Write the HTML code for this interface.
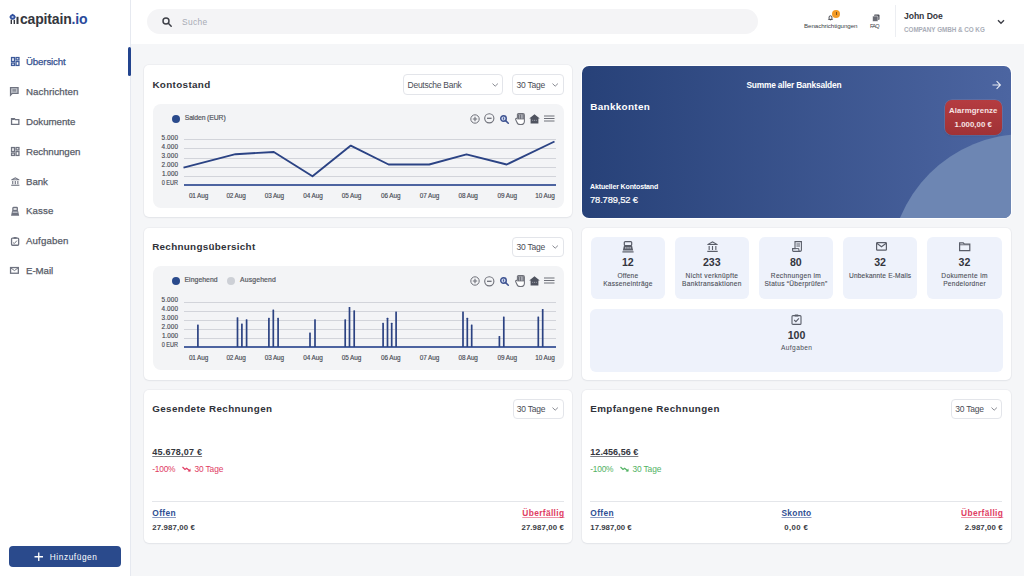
<!DOCTYPE html><html><head><meta charset="utf-8"><style>
html,body{margin:0;padding:0;}
body{width:1024px;height:576px;overflow:hidden;position:relative;background:#f5f6f8;font-family:"Liberation Sans",sans-serif;}
.t{position:absolute;white-space:nowrap;line-height:1;}
svg{display:block}
</style></head><body>
<div style="position:absolute;left:0px;top:0px;width:130px;height:576px;background:#fff;"></div>
<div style="position:absolute;left:130px;top:0px;width:1px;height:576px;background:#e6e9f0;"></div>
<div style="position:absolute;left:131px;top:0px;width:893px;height:44px;background:#fff;"></div>
<div style="position:absolute;left:147px;top:9px;width:611px;height:25px;background:#f4f4f6;border-radius:13px;"></div>
<svg style="position:absolute;left:8px;top:13px;overflow:visible" width="12" height="12" viewBox="0 0 12 12"><g transform="translate(-8,-13)"><g fill="#2f4f9e"><circle cx="12.6" cy="17" r="2.7"/><rect x="12" y="13.9" width="1.2" height="1.4"/><rect x="9.5" y="16.4" width="1.4" height="1.2"/><rect x="14.3" y="16.4" width="1.4" height="1.2"/></g><circle cx="12.6" cy="17" r="1.1" fill="#b8c6e6"/>
<g fill="#33363e"><rect x="10.6" y="19.6" width="1.4" height="4.4"/><rect x="13.6" y="19.8" width="1.4" height="4.2"/><rect x="16.5" y="16.8" width="2" height="7.2"/></g></g></svg>
<div class="t" style="left:20.00px;top:11.64px;font-size:14px;font-weight:700;color:#34363d;letter-spacing:-0.168px;">capitain<span style="color:#2a4a9c">.io</span></div>
<div class="t" style="left:26.00px;top:56.79px;font-size:9.7px;font-weight:400;color:#34508f;letter-spacing:-0.153px;-webkit-text-stroke:0.25px #34508f;">Übersicht</div>
<div class="t" style="left:26.00px;top:86.79px;font-size:9.7px;font-weight:400;color:#575b67;letter-spacing:0.07px;-webkit-text-stroke:0.25px #575b67;">Nachrichten</div>
<div class="t" style="left:26.00px;top:116.79px;font-size:9.7px;font-weight:400;color:#575b67;letter-spacing:-0.019px;-webkit-text-stroke:0.25px #575b67;">Dokumente</div>
<div class="t" style="left:26.00px;top:146.79px;font-size:9.7px;font-weight:400;color:#575b67;letter-spacing:-0.062px;-webkit-text-stroke:0.25px #575b67;">Rechnungen</div>
<div class="t" style="left:26.00px;top:176.79px;font-size:9.7px;font-weight:400;color:#575b67;letter-spacing:-0.079px;-webkit-text-stroke:0.25px #575b67;">Bank</div>
<div class="t" style="left:26.00px;top:206.29px;font-size:9.7px;font-weight:400;color:#575b67;letter-spacing:0.116px;-webkit-text-stroke:0.25px #575b67;">Kasse</div>
<div class="t" style="left:26.00px;top:236.29px;font-size:9.7px;font-weight:400;color:#575b67;letter-spacing:0.13px;-webkit-text-stroke:0.25px #575b67;">Aufgaben</div>
<div class="t" style="left:26.00px;top:266.29px;font-size:9.7px;font-weight:400;color:#575b67;letter-spacing:-0.059px;-webkit-text-stroke:0.25px #575b67;">E-Mail</div>
<div style="position:absolute;left:128px;top:47px;width:2.5px;height:29px;background:#23448e;border-radius:1.5px;"></div>
<svg style="position:absolute;left:10.5px;top:57.3px;overflow:visible" width="8.5" height="9" viewBox="0 0 8.5 9"><g fill="none" stroke="#3d5a9a" stroke-width="1.3"><rect x="0.55" y="0.55" width="2.9" height="4"/><rect x="5.05" y="0.55" width="2.9" height="2.4"/><rect x="0.55" y="6.05" width="2.9" height="2.4"/><rect x="5.05" y="4.55" width="2.9" height="3.9"/></g></svg>
<svg style="position:absolute;left:10.4px;top:87.3px;overflow:visible" width="8.6" height="8.6" viewBox="0 0 8.6 8.6"><path d="M0.55 0.55H8.05V6.4H2.3L0.55 8.1Z" fill="#c9ccd3" stroke="#6f7380" stroke-width="1.3"/><rect x="2.4" y="2.1" width="3.8" height="2.6" fill="#8d919b"/></svg>
<svg style="position:absolute;left:10.5px;top:117.8px;overflow:visible" width="8.4" height="7" viewBox="0 0 8.4 7"><path d="M0.55 0.55H3.4L4.3 1.6H7.85V6.45H0.55Z" fill="none" stroke="#6f7380" stroke-width="1.3"/><rect x="0.55" y="0.55" width="3" height="1.4" fill="#6f7380"/></svg>
<svg style="position:absolute;left:10.5px;top:146.9px;overflow:visible" width="8.5" height="9" viewBox="0 0 8.5 9"><g fill="none" stroke="#6f7380" stroke-width="1.3"><rect x="0.55" y="0.55" width="2.9" height="4"/><rect x="5.05" y="0.55" width="2.9" height="2.4"/><rect x="0.55" y="6.05" width="2.9" height="2.4"/><rect x="5.05" y="4.55" width="2.9" height="3.9"/></g></svg>
<svg style="position:absolute;left:10.5px;top:176.9px;overflow:visible" width="8.6" height="8.8" viewBox="0 0 8.6 8.8"><path d="M4.3 0.3L8.4 2.6V3.3H0.2V2.6Z" fill="#6f7380"/><path d="M4.3 1.3L6.4 2.5H2.2Z" fill="#c9ccd3"/><g fill="#6f7380"><rect x="1.2" y="4" width="1.1" height="3.2"/><rect x="3.75" y="4" width="1.1" height="3.2"/><rect x="6.3" y="4" width="1.1" height="3.2"/><rect x="0.2" y="7.7" width="8.2" height="1.1"/></g></svg>
<svg style="position:absolute;left:10.8px;top:206.9px;overflow:visible" width="8.2" height="8.7" viewBox="0 0 8.2 8.7"><rect x="1.9" y="0.5" width="4.4" height="2.8" rx="0.6" fill="none" stroke="#6f7380" stroke-width="1.3"/><path d="M1.2 3.3H7L8.2 8.7H0Z" fill="#6f7380"/><rect x="1.6" y="4.6" width="5" height="1.2" fill="#c9ccd3"/></svg>
<svg style="position:absolute;left:10.9px;top:236.5px;overflow:visible" width="8.2" height="8.8" viewBox="0 0 8.2 8.8"><rect x="0.55" y="1.1" width="7.1" height="7.15" rx="0.9" fill="none" stroke="#6f7380" stroke-width="1.3"/><rect x="2.6" y="0.1" width="3" height="1.7" rx="0.4" fill="#6f7380"/><path d="M2.1 5.6L3.3 6.6L5.9 3.6" fill="none" stroke="#6f7380" stroke-width="1"/></svg>
<svg style="position:absolute;left:10.2px;top:267.4px;overflow:visible" width="8.9" height="6.8" viewBox="0 0 8.9 6.8"><rect x="0.55" y="0.55" width="7.8" height="5.7" fill="none" stroke="#6f7380" stroke-width="1.3"/><path d="M0.8 0.9L4.45 3.6L8.1 0.9" fill="none" stroke="#6f7380" stroke-width="1"/></svg>
<div style="position:absolute;left:8.7px;top:546.2px;width:112.6px;height:20.8px;background:#2a4a8c;border-radius:4px;"></div>
<svg style="position:absolute;left:34px;top:551.5px;overflow:visible" width="9.5" height="9.5" viewBox="0 0 9.5 9.5"><path d="M4.75 0.5V9M0.5 4.75H9" stroke="#fff" stroke-width="1.3"/></svg>
<div class="t" style="left:49.80px;top:552.77px;font-size:8.3px;font-weight:400;color:#fff;letter-spacing:0.571px;">Hinzufügen</div>
<svg style="position:absolute;left:161.8px;top:16.8px;overflow:visible" width="10" height="10" viewBox="0 0 10 10"><circle cx="4" cy="4" r="3" fill="none" stroke="#3d3f47" stroke-width="1.45"/><path d="M6.3 6.3L9.2 9.2" stroke="#3d3f47" stroke-width="1.5" stroke-linecap="round"/></svg>
<div class="t" style="left:182.00px;top:17.79px;font-size:8.4px;font-weight:400;color:#a8abb5;letter-spacing:0.353px;">Suche</div>
<div class="t" style="left:804.00px;top:23.15px;font-size:6.2px;font-weight:400;color:#3c3e46;letter-spacing:-0.074px;">Benachrichtigungen</div>
<svg style="position:absolute;left:828.3px;top:14.8px;overflow:visible" width="5" height="5.2" viewBox="0 0 5 5.2"><path d="M0.5 4.4H4.5L3.9 3.6V2.2A1.4 1.4 0 0 0 1.1 2.2V3.6Z" fill="none" stroke="#44464e" stroke-width="1"/><rect x="1.9" y="4.5" width="1.2" height="0.8" fill="#44464e"/></svg>
<div style="position:absolute;left:832.3px;top:9.8px;width:8.2px;height:8.2px;border-radius:50%;background:#f39a26;"></div>
<div style="position:absolute;left:836px;top:11.6px;width:0.8px;height:3.6px;background:#7a5320;"></div>
<svg style="position:absolute;left:871.5px;top:14px;overflow:visible" width="8" height="7.5" viewBox="0 0 8 7.5"><rect x="2" y="0.5" width="5.5" height="5.5" rx="1" fill="#4a4c55"/><rect x="0.5" y="2" width="5.5" height="5.5" rx="1" fill="#6a6c75" stroke="#fff" stroke-width="0.6"/></svg>
<div class="t" style="left:870.00px;top:23.86px;font-size:5.6px;font-weight:400;color:#3c3e46;letter-spacing:-0.819px;">FAQ</div>
<div style="position:absolute;left:894.5px;top:5px;width:1px;height:32px;background:#eceef2;"></div>
<div class="t" style="left:904.00px;top:11.72px;font-size:8.6px;font-weight:700;color:#34363d;letter-spacing:-0.053px;">John Doe</div>
<div class="t" style="left:904.00px;top:26.57px;font-size:6.3px;font-weight:700;color:#a9adb7;letter-spacing:-0.026px;">COMPANY GMBH &amp; CO KG</div>
<svg style="position:absolute;left:996.5px;top:18.5px;overflow:visible" width="8" height="6" viewBox="0 0 8 6"><path d="M1 1.2L4 4.2L7 1.2" fill="none" stroke="#3d3f47" stroke-width="1.4"/></svg>
<div style="position:absolute;left:143.5px;top:65px;width:428.5px;height:152px;background:#fff;border-radius:5px;box-shadow:0 0 0 1px rgba(20,30,60,0.03),0 1px 2px rgba(20,30,60,0.05);"></div>
<div style="position:absolute;left:143.5px;top:227.5px;width:428.5px;height:152.5px;background:#fff;border-radius:5px;box-shadow:0 0 0 1px rgba(20,30,60,0.03),0 1px 2px rgba(20,30,60,0.05);"></div>
<div style="position:absolute;left:143.5px;top:390px;width:428.5px;height:152.5px;background:#fff;border-radius:5px;box-shadow:0 0 0 1px rgba(20,30,60,0.03),0 1px 2px rgba(20,30,60,0.05);"></div>
<div style="position:absolute;left:581.5px;top:227.5px;width:429.5px;height:152.5px;background:#fff;border-radius:5px;box-shadow:0 0 0 1px rgba(20,30,60,0.03),0 1px 2px rgba(20,30,60,0.05);"></div>
<div style="position:absolute;left:581.5px;top:390px;width:429.5px;height:152.5px;background:#fff;border-radius:5px;box-shadow:0 0 0 1px rgba(20,30,60,0.03),0 1px 2px rgba(20,30,60,0.05);"></div>
<div class="t" style="left:152.40px;top:79.92px;font-size:9.9px;font-weight:700;color:#303239;letter-spacing:0.331px;">Kontostand</div>
<div style="position:absolute;left:403.3px;top:74.3px;width:99.89999999999998px;height:20.900000000000006px;box-sizing:border-box;border:1px solid #e3e5ea;border-radius:4px;background:#fff;"></div>
<div class="t" style="left:407.60px;top:80.55px;font-size:8.5px;font-weight:400;color:#4a4c55;letter-spacing:-0.283px;">Deutsche Bank</div>
<svg style="position:absolute;left:491.5px;top:82.75px;overflow:visible" width="6.4" height="4" viewBox="0 0 6.4 4"><path d="M0.5 0.6L3.2 3.2L5.9 0.6" fill="none" stroke="#7a7d86" stroke-width="0.9"/></svg>
<div style="position:absolute;left:512.2px;top:74.3px;width:51.59999999999991px;height:20.900000000000006px;box-sizing:border-box;border:1px solid #e3e5ea;border-radius:4px;background:#fff;"></div>
<div class="t" style="left:516.50px;top:80.55px;font-size:8.5px;font-weight:400;color:#4a4c55;letter-spacing:-0.237px;">30 Tage</div>
<svg style="position:absolute;left:552.0999999999999px;top:82.75px;overflow:visible" width="6.4" height="4" viewBox="0 0 6.4 4"><path d="M0.5 0.6L3.2 3.2L5.9 0.6" fill="none" stroke="#7a7d86" stroke-width="0.9"/></svg>
<div style="position:absolute;left:152.5px;top:104.4px;width:411px;height:103.6px;background:#f3f4f6;border-radius:8px;"></div>
<div style="position:absolute;left:171.8px;top:114.8px;width:8.4px;height:8.4px;border-radius:50%;background:#2a4a8c;"></div>
<div class="t" style="left:184.70px;top:115.44px;font-size:6.8px;font-weight:400;color:#55585f;letter-spacing:-0.088px;-webkit-text-stroke:0.2px #55585f;">Salden (EUR)</div>
<svg style="position:absolute;left:469.6px;top:113.7px;overflow:visible" width="10" height="10" viewBox="0 0 10 10"><circle cx="5" cy="5" r="4.2" fill="none" stroke="#6e7079" stroke-width="1"/><path d="M5 2.8V7.2M2.8 5H7.2" stroke="#6e7079" stroke-width="1.1"/></svg>
<svg style="position:absolute;left:484.2px;top:113.4px;overflow:visible" width="10.6" height="10.6" viewBox="0 0 10.6 10.6"><circle cx="5.3" cy="5.3" r="4.6" fill="none" stroke="#6e7079" stroke-width="1.1"/><path d="M3 5.3H7.6" stroke="#6e7079" stroke-width="1.3"/></svg>
<svg style="position:absolute;left:500px;top:114.8px;overflow:visible" width="9" height="8.8" viewBox="0 0 9 8.8"><circle cx="3.5" cy="3.5" r="2.8" fill="#c9d3ec" stroke="#3d5290" stroke-width="1.4"/><path d="M5.6 5.6L8.3 8.3" stroke="#3d5290" stroke-width="1.5" stroke-linecap="round"/><rect x="3.05" y="2.4" width="0.9" height="2.2" fill="#3d5290"/></svg>
<svg style="position:absolute;left:514.6px;top:112.6px;overflow:visible" width="10" height="12.2" viewBox="0 0 10 12.2"><path d="M2.4 5.2V2.2A1.2 1.2 0 0 1 3.6 0.6H8A1.4 1.4 0 0 1 9.4 2V8.4A3.4 3.4 0 0 1 6 11.6H5.2A3.6 3.6 0 0 1 1.8 9L0.6 6.6A0.9 0.9 0 0 1 2.2 5.8L2.4 6.4" fill="#fff" stroke="#6e7079" stroke-width="1.05"/><path d="M2.9 1.2H9V6.4H2.9Z" fill="#6e7079"/><g fill="#d8dbe2"><rect x="4.5" y="1.8" width="0.55" height="3.8"/><rect x="6.1" y="1.6" width="0.55" height="4"/><rect x="7.6" y="2" width="0.55" height="3.6"/></g></svg>
<svg style="position:absolute;left:529px;top:113.8px;overflow:visible" width="11" height="9.6" viewBox="0 0 11 9.6"><path d="M5.5 0.3L10.8 4.6H9.4V9.4H1.6V4.6H0.2Z" fill="#4f535f"/><g fill="#9a9ea8"><rect x="3.2" y="5.8" width="1" height="1.1"/><rect x="5" y="5.8" width="1" height="1.1"/><rect x="6.8" y="5.8" width="1" height="1.1"/></g></svg>
<svg style="position:absolute;left:544.2px;top:115px;overflow:visible" width="10.5" height="7" viewBox="0 0 10.5 7"><path d="M0 1H10.5M0 3.5H10.5M0 6H10.5" stroke="#6e7079" stroke-width="1.1"/></svg>
<div style="position:absolute;left:184px;top:139px;width:371.7px;height:1px;background:#d2d4da;"></div>
<div style="position:absolute;left:184px;top:148px;width:371.7px;height:1px;background:#d2d4da;"></div>
<div style="position:absolute;left:184px;top:158px;width:371.7px;height:1px;background:#d2d4da;"></div>
<div style="position:absolute;left:184px;top:167px;width:371.7px;height:1px;background:#d2d4da;"></div>
<div style="position:absolute;left:184px;top:176px;width:371.7px;height:1px;background:#d2d4da;"></div>
<div style="position:absolute;left:184px;top:184.1px;width:371.7px;height:1.6px;background:#4d64a0;"></div>
<div class="t" style="left:-121.86px;width:300px;text-align:right;top:135.03px;font-size:6.4px;font-weight:400;color:#474a53;letter-spacing:0.14px;-webkit-text-stroke:0.15px #474a53;">5.000</div>
<div class="t" style="left:-121.86px;width:300px;text-align:right;top:144.03px;font-size:6.4px;font-weight:400;color:#474a53;letter-spacing:0.14px;-webkit-text-stroke:0.15px #474a53;">4.000</div>
<div class="t" style="left:-121.86px;width:300px;text-align:right;top:153.13px;font-size:6.4px;font-weight:400;color:#474a53;letter-spacing:0.14px;-webkit-text-stroke:0.15px #474a53;">3.000</div>
<div class="t" style="left:-121.86px;width:300px;text-align:right;top:162.13px;font-size:6.4px;font-weight:400;color:#474a53;letter-spacing:0.14px;-webkit-text-stroke:0.15px #474a53;">2.000</div>
<div class="t" style="left:-121.98px;width:300px;text-align:right;top:171.23px;font-size:6.4px;font-weight:400;color:#474a53;letter-spacing:0.015px;-webkit-text-stroke:0.15px #474a53;">1.000</div>
<div class="t" style="left:-122.00px;width:300px;text-align:right;top:180.23px;font-size:6.4px;font-weight:400;color:#474a53;transform:scaleX(0.865);transform-origin:100% 50%;-webkit-text-stroke:0.15px #474a53;">0 EUR</div>
<div class="t" style="left:48.55px;width:300px;text-align:center;top:193.08px;font-size:6.4px;font-weight:400;color:#474a53;letter-spacing:-0.1px;-webkit-text-stroke:0.15px #474a53;">01 Aug</div>
<div class="t" style="left:86.05px;width:300px;text-align:center;top:193.08px;font-size:6.4px;font-weight:400;color:#474a53;letter-spacing:-0.1px;-webkit-text-stroke:0.15px #474a53;">02 Aug</div>
<div class="t" style="left:124.35px;width:300px;text-align:center;top:193.08px;font-size:6.4px;font-weight:400;color:#474a53;letter-spacing:-0.1px;-webkit-text-stroke:0.15px #474a53;">03 Aug</div>
<div class="t" style="left:162.95px;width:300px;text-align:center;top:193.08px;font-size:6.4px;font-weight:400;color:#474a53;letter-spacing:-0.1px;-webkit-text-stroke:0.15px #474a53;">04 Aug</div>
<div class="t" style="left:201.45px;width:300px;text-align:center;top:193.08px;font-size:6.4px;font-weight:400;color:#474a53;letter-spacing:-0.1px;-webkit-text-stroke:0.15px #474a53;">05 Aug</div>
<div class="t" style="left:240.75px;width:300px;text-align:center;top:193.08px;font-size:6.4px;font-weight:400;color:#474a53;letter-spacing:-0.1px;-webkit-text-stroke:0.15px #474a53;">06 Aug</div>
<div class="t" style="left:279.45px;width:300px;text-align:center;top:193.08px;font-size:6.4px;font-weight:400;color:#474a53;letter-spacing:-0.1px;-webkit-text-stroke:0.15px #474a53;">07 Aug</div>
<div class="t" style="left:318.15px;width:300px;text-align:center;top:193.08px;font-size:6.4px;font-weight:400;color:#474a53;letter-spacing:-0.1px;-webkit-text-stroke:0.15px #474a53;">08 Aug</div>
<div class="t" style="left:357.25px;width:300px;text-align:center;top:193.08px;font-size:6.4px;font-weight:400;color:#474a53;letter-spacing:-0.1px;-webkit-text-stroke:0.15px #474a53;">09 Aug</div>
<div class="t" style="left:394.95px;width:300px;text-align:center;top:193.08px;font-size:6.4px;font-weight:400;color:#474a53;letter-spacing:-0.1px;-webkit-text-stroke:0.15px #474a53;">10 Aug</div>
<svg style="position:absolute;left:0;top:0" width="1024" height="576"><path d="M183.5 167.7 L235.5 154.2 L273.8 152.0 L312.5 176.3 L350.8 145.6 L388.6 164.5 L429.2 164.5 L466.5 154.4 L506.7 164.5 L554.5 141.5" fill="none" stroke="#2b4384" stroke-width="1.9" stroke-linejoin="round"/></svg>
<div class="t" style="left:152.20px;top:242.32px;font-size:9.9px;font-weight:700;color:#303239;letter-spacing:0.281px;">Rechnungsübersicht</div>
<div style="position:absolute;left:512.2px;top:236.7px;width:51.59999999999991px;height:20.69999999999999px;box-sizing:border-box;border:1px solid #e3e5ea;border-radius:4px;background:#fff;"></div>
<div class="t" style="left:516.50px;top:242.85px;font-size:8.5px;font-weight:400;color:#4a4c55;letter-spacing:-0.237px;">30 Tage</div>
<svg style="position:absolute;left:552.0999999999999px;top:245.04999999999998px;overflow:visible" width="6.4" height="4" viewBox="0 0 6.4 4"><path d="M0.5 0.6L3.2 3.2L5.9 0.6" fill="none" stroke="#7a7d86" stroke-width="0.9"/></svg>
<div style="position:absolute;left:152.5px;top:266.3px;width:411px;height:103.5px;background:#f3f4f6;border-radius:8px;"></div>
<div style="position:absolute;left:171.9px;top:276.8px;width:8px;height:8px;border-radius:50%;background:#2a4a8c;"></div>
<div class="t" style="left:184.50px;top:277.44px;font-size:6.8px;font-weight:400;color:#55585f;letter-spacing:0.072px;-webkit-text-stroke:0.2px #55585f;">Eingehend</div>
<div style="position:absolute;left:227.2px;top:276.8px;width:8px;height:8px;border-radius:50%;background:#cdd0d6;"></div>
<div class="t" style="left:240.00px;top:277.44px;font-size:6.8px;font-weight:400;color:#55585f;letter-spacing:0.173px;-webkit-text-stroke:0.2px #55585f;">Ausgehend</div>
<svg style="position:absolute;left:469.6px;top:275.9px;overflow:visible" width="10" height="10" viewBox="0 0 10 10"><circle cx="5" cy="5" r="4.2" fill="none" stroke="#6e7079" stroke-width="1"/><path d="M5 2.8V7.2M2.8 5H7.2" stroke="#6e7079" stroke-width="1.1"/></svg>
<svg style="position:absolute;left:484.2px;top:275.6px;overflow:visible" width="10.6" height="10.6" viewBox="0 0 10.6 10.6"><circle cx="5.3" cy="5.3" r="4.6" fill="none" stroke="#6e7079" stroke-width="1.1"/><path d="M3 5.3H7.6" stroke="#6e7079" stroke-width="1.3"/></svg>
<svg style="position:absolute;left:500px;top:277.0px;overflow:visible" width="9" height="8.8" viewBox="0 0 9 8.8"><circle cx="3.5" cy="3.5" r="2.8" fill="#c9d3ec" stroke="#3d5290" stroke-width="1.4"/><path d="M5.6 5.6L8.3 8.3" stroke="#3d5290" stroke-width="1.5" stroke-linecap="round"/><rect x="3.05" y="2.4" width="0.9" height="2.2" fill="#3d5290"/></svg>
<svg style="position:absolute;left:514.6px;top:274.79999999999995px;overflow:visible" width="10" height="12.2" viewBox="0 0 10 12.2"><path d="M2.4 5.2V2.2A1.2 1.2 0 0 1 3.6 0.6H8A1.4 1.4 0 0 1 9.4 2V8.4A3.4 3.4 0 0 1 6 11.6H5.2A3.6 3.6 0 0 1 1.8 9L0.6 6.6A0.9 0.9 0 0 1 2.2 5.8L2.4 6.4" fill="#fff" stroke="#6e7079" stroke-width="1.05"/><path d="M2.9 1.2H9V6.4H2.9Z" fill="#6e7079"/><g fill="#d8dbe2"><rect x="4.5" y="1.8" width="0.55" height="3.8"/><rect x="6.1" y="1.6" width="0.55" height="4"/><rect x="7.6" y="2" width="0.55" height="3.6"/></g></svg>
<svg style="position:absolute;left:529px;top:276.0px;overflow:visible" width="11" height="9.6" viewBox="0 0 11 9.6"><path d="M5.5 0.3L10.8 4.6H9.4V9.4H1.6V4.6H0.2Z" fill="#4f535f"/><g fill="#9a9ea8"><rect x="3.2" y="5.8" width="1" height="1.1"/><rect x="5" y="5.8" width="1" height="1.1"/><rect x="6.8" y="5.8" width="1" height="1.1"/></g></svg>
<svg style="position:absolute;left:544.2px;top:277.2px;overflow:visible" width="10.5" height="7" viewBox="0 0 10.5 7"><path d="M0 1H10.5M0 3.5H10.5M0 6H10.5" stroke="#6e7079" stroke-width="1.1"/></svg>
<div style="position:absolute;left:184px;top:302px;width:371.7px;height:1px;background:#d2d4da;"></div>
<div style="position:absolute;left:184px;top:311px;width:371.7px;height:1px;background:#d2d4da;"></div>
<div style="position:absolute;left:184px;top:320px;width:371.7px;height:1px;background:#d2d4da;"></div>
<div style="position:absolute;left:184px;top:329px;width:371.7px;height:1px;background:#d2d4da;"></div>
<div style="position:absolute;left:184px;top:338px;width:371.7px;height:1px;background:#d2d4da;"></div>
<div style="position:absolute;left:184px;top:346.3px;width:371.7px;height:1.6px;background:#4d64a0;"></div>
<div class="t" style="left:-121.86px;width:300px;text-align:right;top:297.23px;font-size:6.4px;font-weight:400;color:#474a53;letter-spacing:0.14px;-webkit-text-stroke:0.15px #474a53;">5.000</div>
<div class="t" style="left:-121.86px;width:300px;text-align:right;top:306.23px;font-size:6.4px;font-weight:400;color:#474a53;letter-spacing:0.14px;-webkit-text-stroke:0.15px #474a53;">4.000</div>
<div class="t" style="left:-121.86px;width:300px;text-align:right;top:315.33px;font-size:6.4px;font-weight:400;color:#474a53;letter-spacing:0.14px;-webkit-text-stroke:0.15px #474a53;">3.000</div>
<div class="t" style="left:-121.86px;width:300px;text-align:right;top:324.33px;font-size:6.4px;font-weight:400;color:#474a53;letter-spacing:0.14px;-webkit-text-stroke:0.15px #474a53;">2.000</div>
<div class="t" style="left:-121.98px;width:300px;text-align:right;top:333.43px;font-size:6.4px;font-weight:400;color:#474a53;letter-spacing:0.015px;-webkit-text-stroke:0.15px #474a53;">1.000</div>
<div class="t" style="left:-122.00px;width:300px;text-align:right;top:342.43px;font-size:6.4px;font-weight:400;color:#474a53;transform:scaleX(0.865);transform-origin:100% 50%;-webkit-text-stroke:0.15px #474a53;">0 EUR</div>
<div class="t" style="left:48.55px;width:300px;text-align:center;top:355.28px;font-size:6.4px;font-weight:400;color:#474a53;letter-spacing:-0.1px;-webkit-text-stroke:0.15px #474a53;">01 Aug</div>
<div class="t" style="left:86.05px;width:300px;text-align:center;top:355.28px;font-size:6.4px;font-weight:400;color:#474a53;letter-spacing:-0.1px;-webkit-text-stroke:0.15px #474a53;">02 Aug</div>
<div class="t" style="left:124.35px;width:300px;text-align:center;top:355.28px;font-size:6.4px;font-weight:400;color:#474a53;letter-spacing:-0.1px;-webkit-text-stroke:0.15px #474a53;">03 Aug</div>
<div class="t" style="left:162.95px;width:300px;text-align:center;top:355.28px;font-size:6.4px;font-weight:400;color:#474a53;letter-spacing:-0.1px;-webkit-text-stroke:0.15px #474a53;">04 Aug</div>
<div class="t" style="left:201.45px;width:300px;text-align:center;top:355.28px;font-size:6.4px;font-weight:400;color:#474a53;letter-spacing:-0.1px;-webkit-text-stroke:0.15px #474a53;">05 Aug</div>
<div class="t" style="left:240.75px;width:300px;text-align:center;top:355.28px;font-size:6.4px;font-weight:400;color:#474a53;letter-spacing:-0.1px;-webkit-text-stroke:0.15px #474a53;">06 Aug</div>
<div class="t" style="left:279.45px;width:300px;text-align:center;top:355.28px;font-size:6.4px;font-weight:400;color:#474a53;letter-spacing:-0.1px;-webkit-text-stroke:0.15px #474a53;">07 Aug</div>
<div class="t" style="left:318.15px;width:300px;text-align:center;top:355.28px;font-size:6.4px;font-weight:400;color:#474a53;letter-spacing:-0.1px;-webkit-text-stroke:0.15px #474a53;">08 Aug</div>
<div class="t" style="left:357.25px;width:300px;text-align:center;top:355.28px;font-size:6.4px;font-weight:400;color:#474a53;letter-spacing:-0.1px;-webkit-text-stroke:0.15px #474a53;">09 Aug</div>
<div class="t" style="left:394.95px;width:300px;text-align:center;top:355.28px;font-size:6.4px;font-weight:400;color:#474a53;letter-spacing:-0.1px;-webkit-text-stroke:0.15px #474a53;">10 Aug</div>
<svg style="position:absolute;left:0;top:0" width="1024" height="576"><g fill="#2b4282"><rect x="197.05" y="324.50" width="1.7" height="22.50" rx="0.5"/><rect x="236.65" y="317.30" width="1.7" height="29.70" rx="0.5"/><rect x="241.05" y="323.50" width="1.7" height="23.50" rx="0.5"/><rect x="245.75" y="319.30" width="1.7" height="27.70" rx="0.5"/><rect x="268.05" y="317.70" width="1.7" height="29.30" rx="0.5"/><rect x="272.45" y="309.50" width="1.7" height="37.50" rx="0.5"/><rect x="277.25" y="317.70" width="1.7" height="29.30" rx="0.5"/><rect x="309.15" y="332.50" width="1.7" height="14.50" rx="0.5"/><rect x="314.15" y="319.20" width="1.7" height="27.80" rx="0.5"/><rect x="344.35" y="319.20" width="1.7" height="27.80" rx="0.5"/><rect x="348.65" y="307.00" width="1.7" height="40.00" rx="0.5"/><rect x="353.35" y="310.20" width="1.7" height="36.80" rx="0.5"/><rect x="382.25" y="322.80" width="1.7" height="24.20" rx="0.5"/><rect x="386.65" y="317.70" width="1.7" height="29.30" rx="0.5"/><rect x="390.85" y="322.80" width="1.7" height="24.20" rx="0.5"/><rect x="395.25" y="311.40" width="1.7" height="35.60" rx="0.5"/><rect x="462.15" y="311.40" width="1.7" height="35.60" rx="0.5"/><rect x="466.45" y="317.70" width="1.7" height="29.30" rx="0.5"/><rect x="470.85" y="324.40" width="1.7" height="22.60" rx="0.5"/><rect x="498.55" y="336.00" width="1.7" height="11.00" rx="0.5"/><rect x="502.95" y="316.60" width="1.7" height="30.40" rx="0.5"/><rect x="537.45" y="316.60" width="1.7" height="30.40" rx="0.5"/><rect x="541.85" y="309.00" width="1.7" height="38.00" rx="0.5"/></g></svg>
<div style="position:absolute;left:581.5px;top:65.5px;width:429.5px;height:152.5px;border-radius:7px;overflow:hidden;background:linear-gradient(90deg,#274178 0%,#4c65a1 100%);box-shadow:0 0 0 1px #fff;">
<div style="position:absolute;left:308.5px;top:68.9px;width:270px;height:270px;border-radius:50%;background:#6d86b3;"></div>
</div>
<div class="t" style="left:643.90px;width:300px;text-align:center;top:80.69px;font-size:8.4px;font-weight:700;color:#ffffff;letter-spacing:-0.192px;">Summe aller Banksalden</div>
<svg style="position:absolute;left:991.5px;top:79.5px;overflow:visible" width="9" height="10" viewBox="0 0 9 10"><path d="M0.5 5H8.2M4.6 1.2L8.4 5L4.6 8.8" fill="none" stroke="#e6eaf3" stroke-width="1.1"/></svg>
<div class="t" style="left:590.30px;top:102.42px;font-size:9.9px;font-weight:700;color:#ffffff;letter-spacing:0.335px;">Bankkonten</div>
<div style="position:absolute;left:944.5px;top:99.8px;width:57.5px;height:35.3px;border-radius:7px;background:linear-gradient(180deg,#b53c40,#a03236);box-shadow:0 0 0 0.6px rgba(255,200,200,0.25),0 1px 2px rgba(0,0,0,0.12);"></div>
<div class="t" style="left:823.31px;width:300px;text-align:center;top:106.79px;font-size:7.8px;font-weight:700;color:#f7e4e4;letter-spacing:0.111px;">Alarmgrenze</div>
<div class="t" style="left:823.28px;width:300px;text-align:center;top:120.89px;font-size:7.8px;font-weight:700;color:#f7e4e4;letter-spacing:0.054px;">1.000,00 €</div>
<div class="t" style="left:590.00px;top:182.57px;font-size:7.0px;font-weight:700;color:#ffffff;letter-spacing:-0.132px;">Aktueller Kontostand</div>
<div class="t" style="left:590.00px;top:194.84px;font-size:9.4px;font-weight:400;color:#ffffff;letter-spacing:-0.151px;-webkit-text-stroke:0.2px #fff;">78.789,52 €</div>
<div style="position:absolute;left:590.5px;top:236.5px;width:74.6px;height:62.8px;background:#eef2fb;border-radius:6px;"></div>
<div class="t" style="left:477.80px;width:300px;text-align:center;top:257.12px;font-size:10.6px;font-weight:700;color:#34363e;">12</div>
<div class="t" style="left:477.90px;width:300px;text-align:center;top:272.91px;font-size:6.6px;font-weight:400;color:#4b4e57;letter-spacing:0.198px;-webkit-text-stroke:0.1px #4b4e57;">Offene</div>
<div class="t" style="left:477.93px;width:300px;text-align:center;top:281.31px;font-size:6.6px;font-weight:400;color:#4b4e57;letter-spacing:0.265px;-webkit-text-stroke:0.1px #4b4e57;">Kasseneinträge</div>
<div style="position:absolute;left:674.5px;top:236.5px;width:74.6px;height:62.8px;background:#eef2fb;border-radius:6px;"></div>
<div class="t" style="left:561.80px;width:300px;text-align:center;top:257.12px;font-size:10.6px;font-weight:700;color:#34363e;">233</div>
<div class="t" style="left:561.96px;width:300px;text-align:center;top:272.91px;font-size:6.6px;font-weight:400;color:#4b4e57;letter-spacing:0.322px;-webkit-text-stroke:0.1px #4b4e57;">Nicht verknüpfte</div>
<div class="t" style="left:561.95px;width:300px;text-align:center;top:281.31px;font-size:6.6px;font-weight:400;color:#4b4e57;letter-spacing:0.297px;-webkit-text-stroke:0.1px #4b4e57;">Banktransaktionen</div>
<div style="position:absolute;left:758.5px;top:236.5px;width:74.6px;height:62.8px;background:#eef2fb;border-radius:6px;"></div>
<div class="t" style="left:645.80px;width:300px;text-align:center;top:257.12px;font-size:10.6px;font-weight:700;color:#34363e;">80</div>
<div class="t" style="left:645.96px;width:300px;text-align:center;top:272.91px;font-size:6.6px;font-weight:400;color:#4b4e57;letter-spacing:0.317px;-webkit-text-stroke:0.1px #4b4e57;">Rechnungen im</div>
<div class="t" style="left:645.94px;width:300px;text-align:center;top:281.31px;font-size:6.6px;font-weight:400;color:#4b4e57;letter-spacing:0.272px;-webkit-text-stroke:0.1px #4b4e57;">Status “Überprüfen”</div>
<div style="position:absolute;left:842.8px;top:236.5px;width:74.6px;height:62.8px;background:#eef2fb;border-radius:6px;"></div>
<div class="t" style="left:730.10px;width:300px;text-align:center;top:257.12px;font-size:10.6px;font-weight:700;color:#34363e;">32</div>
<div class="t" style="left:730.18px;width:300px;text-align:center;top:272.91px;font-size:6.6px;font-weight:400;color:#4b4e57;letter-spacing:0.16px;-webkit-text-stroke:0.1px #4b4e57;">Unbekannte E-Mails</div>
<div style="position:absolute;left:927.1px;top:236.5px;width:74.6px;height:62.8px;background:#eef2fb;border-radius:6px;"></div>
<div class="t" style="left:814.40px;width:300px;text-align:center;top:257.12px;font-size:10.6px;font-weight:700;color:#34363e;">32</div>
<div class="t" style="left:814.56px;width:300px;text-align:center;top:272.91px;font-size:6.6px;font-weight:400;color:#4b4e57;letter-spacing:0.326px;-webkit-text-stroke:0.1px #4b4e57;">Dokumente im</div>
<div class="t" style="left:814.53px;width:300px;text-align:center;top:281.31px;font-size:6.6px;font-weight:400;color:#4b4e57;letter-spacing:0.255px;-webkit-text-stroke:0.1px #4b4e57;">Pendelordner</div>
<div style="position:absolute;left:590px;top:309px;width:413px;height:62.5px;background:#eef2fb;border-radius:6px;"></div>
<div class="t" style="left:646.50px;width:300px;text-align:center;top:329.92px;font-size:10.6px;font-weight:700;color:#34363e;">100</div>
<div class="t" style="left:646.70px;width:300px;text-align:center;top:345.21px;font-size:6.6px;font-weight:400;color:#4b4e57;letter-spacing:0.391px;">Aufgaben</div>
<svg style="position:absolute;left:622px;top:240.6px;overflow:visible" width="12" height="12" viewBox="0 0 12 12"><rect x="2.3" y="0.6" width="7.4" height="4" rx="1" fill="none" stroke="#5a5e69" stroke-width="1.2"/><path d="M2 4.6H10L11.2 9.6H0.8Z" fill="#5a5e69"/><g fill="#dfe3ec"><rect x="3.2" y="6.3" width="1.3" height="1.2"/><rect x="5.35" y="6.3" width="1.3" height="1.2"/><rect x="7.5" y="6.3" width="1.3" height="1.2"/></g><rect x="0.4" y="10.3" width="11.2" height="1.2" fill="#5a5e69"/></svg>
<svg style="position:absolute;left:706.5px;top:241px;overflow:visible" width="11" height="11.2" viewBox="0 0 11 11.2"><path d="M5.5 0.3L10.7 3.2V4.1H0.3V3.2Z" fill="#5a5e69"/><path d="M5.5 1.6L8.2 3.1H2.8Z" fill="#dfe3ec"/><g fill="#5a5e69"><rect x="1.6" y="5" width="1.1" height="4"/><rect x="4.95" y="5" width="1.1" height="4"/><rect x="8.3" y="5" width="1.1" height="4"/><rect x="0.3" y="9.8" width="10.4" height="1.2"/></g></svg>
<svg style="position:absolute;left:791.5px;top:241px;overflow:visible" width="10" height="11" viewBox="0 0 10 11"><path d="M3 0.6H9.4V9.2A1.4 1.4 0 0 1 8 10.4H1.6A1.2 1.2 0 0 1 0.6 9.2V7.6H3Z" fill="none" stroke="#5a5e69" stroke-width="1.1"/><path d="M4.4 3H8M4.4 5H8M3 7.6H6.8V9.2A1.2 1.2 0 0 0 8 10.4" fill="none" stroke="#5a5e69" stroke-width="1"/></svg>
<svg style="position:absolute;left:875.5px;top:241.8px;overflow:visible" width="11" height="9" viewBox="0 0 11 9"><rect x="0.6" y="0.6" width="9.8" height="7.6" rx="0.8" fill="none" stroke="#5a5e69" stroke-width="1.2"/><path d="M0.8 1.2L5.5 4.8L10.2 1.2" fill="none" stroke="#5a5e69" stroke-width="1.1"/></svg>
<svg style="position:absolute;left:959.3px;top:241.8px;overflow:visible" width="11.5" height="9.2" viewBox="0 0 11.5 9.2"><path d="M0.6 0.8H4.2L5.2 2H10.8V8.6H0.6Z" fill="none" stroke="#5a5e69" stroke-width="1.2"/><path d="M0.6 2.8H10.8" stroke="#5a5e69" stroke-width="0.9"/></svg>
<svg style="position:absolute;left:791.2px;top:314.3px;overflow:visible" width="11" height="11" viewBox="0 0 11 11"><rect x="1" y="1.6" width="9" height="8.8" rx="1" fill="none" stroke="#5a5e69" stroke-width="1.1"/><rect x="3.6" y="0.4" width="3.8" height="2" rx="0.5" fill="#5a5e69"/><path d="M3.2 6L4.9 7.6L7.9 4.4" fill="none" stroke="#5a5e69" stroke-width="1.1"/></svg>
<div class="t" style="left:152.20px;top:404.30px;font-size:9.8px;font-weight:700;color:#303239;letter-spacing:0.402px;">Gesendete Rechnungen</div>
<div style="position:absolute;left:512.5px;top:398.9px;width:51.10000000000002px;height:20.5px;box-sizing:border-box;border:1px solid #e3e5ea;border-radius:4px;background:#fff;"></div>
<div class="t" style="left:516.80px;top:404.95px;font-size:8.5px;font-weight:400;color:#4a4c55;letter-spacing:-0.237px;">30 Tage</div>
<svg style="position:absolute;left:551.9px;top:407.15px;overflow:visible" width="6.4" height="4" viewBox="0 0 6.4 4"><path d="M0.5 0.6L3.2 3.2L5.9 0.6" fill="none" stroke="#7a7d86" stroke-width="0.9"/></svg>
<div class="t" style="left:152.30px;top:447.68px;font-size:9.0px;font-weight:700;color:#34363d;letter-spacing:0.206px;text-decoration:underline;text-decoration-thickness:1px;text-underline-offset:0.6px;text-decoration-color:#7d8087;text-decoration-skip-ink:none;">45.678,07 €</div>
<div class="t" style="left:152.30px;top:464.89px;font-size:8.4px;font-weight:400;color:#e03c63;letter-spacing:-0.241px;">-100%</div>
<svg style="position:absolute;left:181.6px;top:466.2px;overflow:visible" width="9" height="6" viewBox="0 0 9 6"><path d="M0.5 1L3 3.4L4.6 2.2L8 5" fill="none" stroke="#e03c63" stroke-width="1.2"/><path d="M8.6 5.6L5.6 5.4L8.4 2.6Z" fill="#e03c63"/></svg>
<div class="t" style="left:194.50px;top:464.89px;font-size:8.4px;font-weight:400;color:#e03c63;letter-spacing:-0.141px;">30 Tage</div>
<div style="position:absolute;left:151.7px;top:501px;width:411.90000000000003px;height:1px;background:#e4e6ea;"></div>
<div class="t" style="left:152.30px;top:508.69px;font-size:8.4px;font-weight:700;color:#2f4f94;letter-spacing:0.362px;text-decoration:underline;text-decoration-thickness:1px;text-underline-offset:1px;text-decoration-skip-ink:none;text-decoration-color:rgba(47,79,148,0.55);">Offen</div>
<div class="t" style="left:152.30px;top:524.19px;font-size:7.8px;font-weight:700;color:#3a3c44;letter-spacing:0.125px;">27.987,00 €</div>
<div class="t" style="left:264.46px;width:300px;text-align:right;top:508.69px;font-size:8.4px;font-weight:700;color:#e03c63;letter-spacing:0.355px;text-decoration:underline;text-decoration-thickness:1px;text-underline-offset:1px;text-decoration-skip-ink:none;text-decoration-color:rgba(224,60,99,0.55);">Überfällig</div>
<div class="t" style="left:263.92px;width:300px;text-align:right;top:524.19px;font-size:7.8px;font-weight:700;color:#3a3c44;letter-spacing:0.115px;">27.987,00 €</div>
<div class="t" style="left:590.20px;top:404.30px;font-size:9.8px;font-weight:700;color:#303239;letter-spacing:0.422px;">Empfangene Rechnungen</div>
<div style="position:absolute;left:951px;top:398.9px;width:51.39999999999998px;height:20.5px;box-sizing:border-box;border:1px solid #e3e5ea;border-radius:4px;background:#fff;"></div>
<div class="t" style="left:955.30px;top:404.95px;font-size:8.5px;font-weight:400;color:#4a4c55;letter-spacing:-0.237px;">30 Tage</div>
<svg style="position:absolute;left:990.6999999999999px;top:407.15px;overflow:visible" width="6.4" height="4" viewBox="0 0 6.4 4"><path d="M0.5 0.6L3.2 3.2L5.9 0.6" fill="none" stroke="#7a7d86" stroke-width="0.9"/></svg>
<div class="t" style="left:590.30px;top:447.68px;font-size:9.0px;font-weight:700;color:#34363d;letter-spacing:0.046px;text-decoration:underline;text-decoration-thickness:1px;text-underline-offset:0.6px;text-decoration-color:#7d8087;text-decoration-skip-ink:none;">12.456,56 €</div>
<div class="t" style="left:590.30px;top:464.89px;font-size:8.4px;font-weight:400;color:#52b263;letter-spacing:-0.241px;">-100%</div>
<svg style="position:absolute;left:619.6px;top:466.2px;overflow:visible" width="9" height="6" viewBox="0 0 9 6"><path d="M0.5 1L3 3.4L4.6 2.2L8 5" fill="none" stroke="#52b263" stroke-width="1.2"/><path d="M8.6 5.6L5.6 5.4L8.4 2.6Z" fill="#52b263"/></svg>
<div class="t" style="left:632.50px;top:464.89px;font-size:8.4px;font-weight:400;color:#52b263;letter-spacing:-0.141px;">30 Tage</div>
<div style="position:absolute;left:589.7px;top:501px;width:412.69999999999993px;height:1px;background:#e4e6ea;"></div>
<div class="t" style="left:590.30px;top:508.69px;font-size:8.4px;font-weight:700;color:#2f4f94;letter-spacing:0.362px;text-decoration:underline;text-decoration-thickness:1px;text-underline-offset:1px;text-decoration-skip-ink:none;text-decoration-color:rgba(47,79,148,0.55);">Offen</div>
<div class="t" style="left:590.30px;top:524.19px;font-size:7.8px;font-weight:700;color:#3a3c44;letter-spacing:0.015px;">17.987,00 €</div>
<div class="t" style="left:646.53px;width:300px;text-align:center;top:508.69px;font-size:8.4px;font-weight:700;color:#2f4f94;letter-spacing:0.267px;text-decoration:underline;text-decoration-thickness:1px;text-underline-offset:1px;text-decoration-skip-ink:none;text-decoration-color:rgba(47,79,148,0.55);">Skonto</div>
<div class="t" style="left:646.19px;width:300px;text-align:center;top:524.19px;font-size:7.8px;font-weight:700;color:#3a3c44;letter-spacing:0.372px;">0,00 €</div>
<div class="t" style="left:703.25px;width:300px;text-align:right;top:508.69px;font-size:8.4px;font-weight:700;color:#e03c63;letter-spacing:0.355px;text-decoration:underline;text-decoration-thickness:1px;text-underline-offset:1px;text-decoration-skip-ink:none;text-decoration-color:rgba(224,60,99,0.55);">Überfällig</div>
<div class="t" style="left:702.71px;width:300px;text-align:right;top:524.19px;font-size:7.8px;font-weight:700;color:#3a3c44;letter-spacing:0.109px;">2.987,00 €</div>
</body></html>
